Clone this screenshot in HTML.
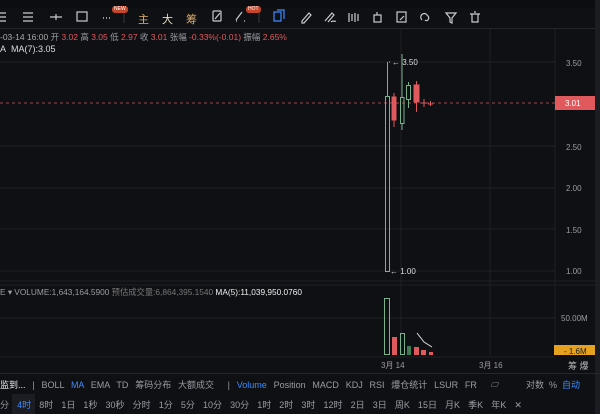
<!DOCTYPE html>
<html><head><meta charset="utf-8"><style>
*{margin:0;padding:0;box-sizing:border-box}
body{width:600px;height:414px;background:#0f1014;overflow:hidden;position:relative;font-family:"Liberation Sans","Noto Sans CJK SC",sans-serif;color:#9a9ca3}
.a{position:absolute;white-space:nowrap}
.t{font-size:9px}
.ic{position:absolute;top:11px;color:#d0d2d6;font-size:11px}
</style></head><body>
<div class="a" style="left:0;top:0;width:600px;height:8px;background:#0c0d10"></div>
<div class="a" style="left:0;top:28px;width:600px;height:1px;background:#24262b"></div>
<div class="a" style="left:595px;top:0;width:5px;height:414px;background:#1c1d22"></div>
<!-- toolbar -->
<svg class="a" style="left:0;top:0" width="600" height="28" stroke="#c9cbcf" fill="none" stroke-width="1.2">
<path d="M0 13h6M0 17h6M0 21h6"/>
<path d="M23 13h10M23 17h10M23 21h10"/>
<path d="M50 17h12M56 14v6"/>
<rect x="77" y="12" width="10" height="9"/>
<path d="M103 18h1M106 18h1M109 18h1" stroke-width="1.5"/>
<line x1="124" y1="12" x2="124" y2="23" stroke="#333"/>
<rect x="213" y="11" width="8" height="10" rx="1"/><path d="M215 19l5-6"/>
<path d="M236 20l6-8M236 21h1M244 21h1"/>
<line x1="259" y1="12" x2="259" y2="23" stroke="#333"/>
<path d="M274 12h7v9h-7zM277 10h7v9" stroke="#3d8bff"/>
<path d="M302 21l7-8 2 2-7 8h-2z"/>
<path d="M325 21l7-8 2 2-6 7M331 22c2-2 3 0 5-1"/>
<path d="M349 13v9M352 14v7M355 13v9M358 14v7"/>
<rect x="374" y="15" width="7" height="7"/><path d="M377 12v3"/>
<rect x="397" y="12" width="9" height="10"/><path d="M400 20l4-4"/>
<path d="M422 20c-3-3 0-8 4-6l2 2c2 3-1 6-3 4"/>
<path d="M446 13h10l-4 5v5l-2-1v-4z"/>
<path d="M470 14h10M472 14v8h6v-8M474 12h2"/>
</svg>
<div class="a" style="left:112px;top:6px;background:#c4452a;color:#fff;font-size:5px;border-radius:3px;padding:0 2px;line-height:7px">NEW</div>
<div class="a" style="left:246px;top:6px;background:#c4452a;color:#fff;font-size:5px;border-radius:3px;padding:0 2px;line-height:7px">HOT</div>
<div class="ic" style="left:138px;color:#e0b26a">主</div>
<div class="ic" style="left:162px;color:#e8dfc8">大</div>
<div class="ic" style="left:186px;color:#e0b26a">筹</div>
<!-- info -->
<div class="a" style="left:0;top:31px;font-size:8.5px"><span style="color:#aaa">-03-14 16:00</span> 开 <span style="color:#e0595c">3.02</span> 高 <span style="color:#e0595c">3.05</span> 低 <span style="color:#e0595c">2.97</span> 收 <span style="color:#e0595c">3.01</span> 张幅 <span style="color:#e0595c">-0.33%(-0.01)</span> 振幅 <span style="color:#e0595c">2.65%</span></div>
<div class="a t" style="left:0;top:44px;color:#ddd">A&nbsp;&nbsp;MA(7):3.05</div>
<!-- chart -->
<svg class="a" style="left:0;top:29px" width="600" height="340">
<g stroke="#1e2024" stroke-width="1">
<path d="M401 0v326M490 0v326M555 0v326"/>
<path d="M0 33h555M0 117h555M0 159h555M0 200h555M0 242h555"/>
<path d="M0 289h555M0 328h555M0 252h600M0 256h600"/>
</g>
<path d="M0 74h555" stroke="#a04848" stroke-dasharray="3 3"/>
<g fill="none" stroke="#7bb08c">
<path d="M387.5 33v34M387.5 67"/><rect x="385.5" y="67.5" width="4" height="175"/>
<path d="M402 25v43M402 94v7"/><rect x="400.5" y="68.5" width="3.5" height="26"/>
<path d="M408.5 53v3M408.5 70v9"/><rect x="406.5" y="56.5" width="4" height="14"/>
</g>
<g stroke="#e0595c" fill="#e0595c">
<path d="M394 64v34M416.5 52v31M424 70v8M421 74h6M428 75h5M430.5 72v5" fill="none"/>
<rect x="392" y="68" width="4" height="23"/><rect x="414" y="56" width="5" height="17"/>
</g>
<path d="M389 33h1" stroke="#ccc"/>
<text x="392" y="36" fill="#ddd" font-size="8" font-family="Liberation Sans">← 3.50</text>
<text x="390" y="245" fill="#ddd" font-size="8" font-family="Liberation Sans">← 1.00</text>
<g fill="#9a9ca3" font-size="8" font-family="Liberation Sans">
<text x="566" y="37">3.50</text><text x="566" y="121">2.50</text><text x="566" y="162">2.00</text><text x="566" y="204">1.50</text><text x="566" y="245">1.00</text>
<text x="561" y="292">50.00M</text>
<text x="381" y="339">3月 14</text><text x="479" y="339">3月 16</text>
</g>
<rect x="555" y="67" width="40" height="14" fill="#e0595c"/>
<text x="565" y="77" fill="#fff" font-size="8" font-family="Liberation Sans">3.01</text>
<!-- volume -->
<g fill="none" stroke="#7bb08c"><rect x="384.5" y="269.5" width="5" height="56"/><rect x="400.5" y="304.5" width="4" height="21"/></g>
<rect x="407" y="317" width="4" height="9" fill="#3f7a55"/>
<g fill="#e0595c"><rect x="392" y="308" width="5" height="18"/><rect x="414" y="318" width="5" height="8"/><rect x="421" y="321" width="5" height="5"/><rect x="429" y="323" width="4" height="3"/></g>
<path d="M417 304l7 9 8 5" stroke="#ddd" fill="none"/>
<rect x="554" y="316" width="41" height="10" fill="#e6a11f"/>
<text x="564" y="325" fill="#222" font-size="8" font-family="Liberation Sans">- 1.6M</text>
</svg>
<div class="a" style="left:0;top:286px;font-size:8.3px;color:#9a9ca3">E ▾ VOLUME:1,643,164.5900 <span style="color:#777">预估成交量:6,864,395.1540</span> <span style="color:#eee">MA(5):11,039,950.0760</span></div>
<div class="a t" style="left:568px;top:359px;color:#bbb">筹 爆</div>
<!-- bottom -->
<div class="a" style="left:0;top:373px;width:600px;height:1px;background:#24262b"></div>
<div class="a t" style="left:0;top:378px;word-spacing:4.3px"><span style="color:#eee">监到...</span> | BOLL <span style="color:#3d8bff">MA</span> EMA TD 筹码分布 大额成交 &nbsp;| <span style="color:#3d8bff">Volume</span> Position MACD KDJ RSI 爆仓统计 LSUR FR &nbsp;▱</div>
<div class="a t" style="left:526px;top:378px">对数 &nbsp;% &nbsp;<span style="color:#3d8bff">自动</span></div>
<div class="a" style="left:12px;top:394px;width:23px;height:20px;background:#1b1d22"></div>
<div class="a t" style="left:0;top:398px;word-spacing:5.6px">分 <span style="color:#3d8bff">4时</span> 8时 1日 1秒 30秒 分时 1分 5分 10分 30分 1时 2时 3时 12时 2日 3日 周K 15日 月K 季K 年K ✕</div>
</body></html>
